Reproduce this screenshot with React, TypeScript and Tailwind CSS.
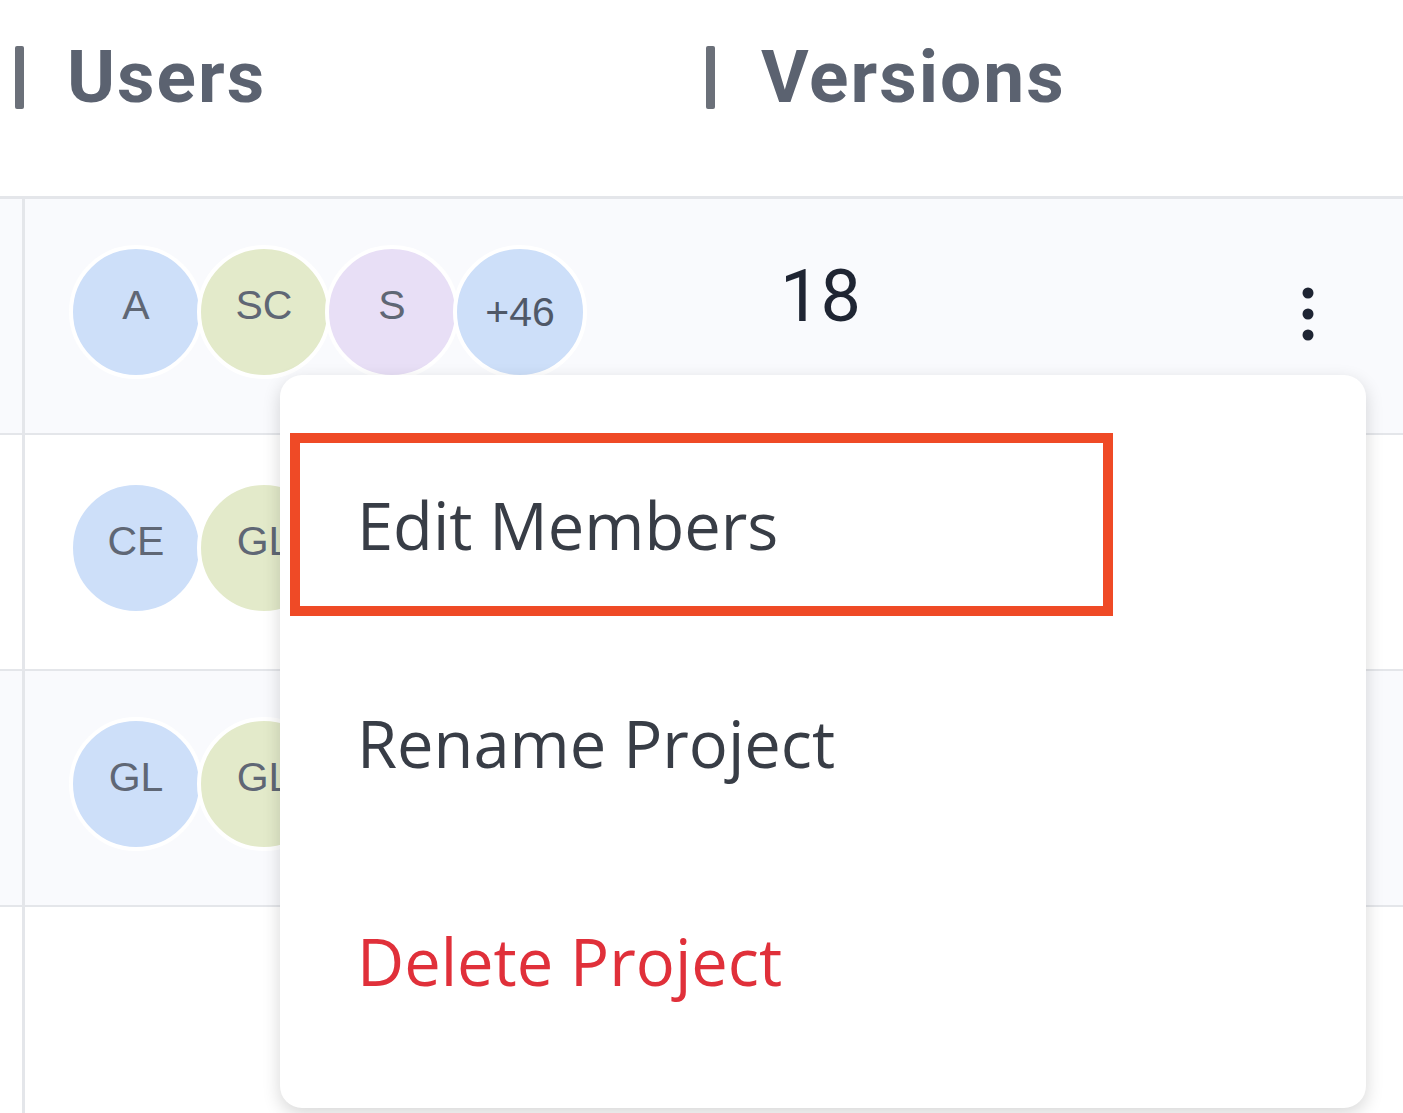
import React from 'react';

type Avatar = { label: string; color: string };

const rows: { avatars: Avatar[]; versions: string; shaded: boolean }[] = [
  {
    avatars: [
      { label: 'A', color: 'bg-[#cddff9]' },
      { label: 'SC', color: 'bg-[#e3eaca]' },
      { label: 'S', color: 'bg-[#e8dff6]' },
      { label: '+46', color: 'bg-[#cddff9]' },
    ],
    versions: '18',
    shaded: true,
  },
  {
    avatars: [
      { label: 'CE', color: 'bg-[#cddff9]' },
      { label: 'GL', color: 'bg-[#e3eaca]' },
    ],
    versions: '',
    shaded: false,
  },
  {
    avatars: [
      { label: 'GL', color: 'bg-[#cddff9]' },
      { label: 'GL', color: 'bg-[#e3eaca]' },
    ],
    versions: '',
    shaded: true,
  },
];

const KebabIcon = () => (
  <svg width="12" height="54" viewBox="0 0 12 54" className="text-[#1e2433]">
    <circle cx="6" cy="6" r="5.5" fill="currentColor" />
    <circle cx="6" cy="27" r="5.5" fill="currentColor" />
    <circle cx="6" cy="48" r="5.5" fill="currentColor" />
  </svg>
);

const App: React.FC = () => {
  return (
    <div className="relative w-full h-[1113px] overflow-hidden bg-white">
      {/* Header */}
      <div className="h-[196px] border-b-[3px] border-[#e4e6ea] box-content">
        <div className="flex items-center h-[72px] pt-[41px] box-content font-['Roboto',sans-serif] font-bold text-[73px] tracking-[2px] leading-none text-[#5b6270]">
          <div className="flex items-center w-[691px] ml-[15px]">
            <span className="w-[9px] h-[63px] bg-[#6b7079] rounded-[2px]" />
            <span className="ml-[43px]">Users</span>
          </div>
          <div className="flex items-center">
            <span className="w-[9px] h-[63px] bg-[#6b7079] rounded-[2px]" />
            <span className="ml-[46px]">Versions</span>
          </div>
        </div>
      </div>

      {/* Rows */}
      {[...rows, null].map((row, i) => (
        <div
          key={i}
          className={`flex ${row ? 'h-[236px] border-b-2 border-[#e4e6ea]' : 'h-[240px]'} ${
            row && row.shaded ? 'bg-[#f9fafd]' : 'bg-white'
          }`}
        >
          <div className="w-[22px]" />
          <div className="w-[3px] bg-[#e4e6ea]" />
          <div className="w-[681px] flex items-start pt-[46px] pl-[44px]">
            {row?.avatars.map((a, j) => (
              <div
                key={j}
                className={`${j > 0 ? '-ml-[6px]' : ''} w-[134px] h-[134px] rounded-full border-4 border-white ${a.color} flex items-center justify-center font-['Liberation_Sans',Arial,sans-serif] text-[41px] text-[#5f6775]`}
              >
                <span className={a.label.startsWith('+') ? 'mt-[2px] text-[#4f5868]' : 'mb-[12px]'}>{a.label}</span>
              </div>
            ))}
          </div>
          {row && row.versions && (
            <div className="flex-1 flex items-start pt-[62px] pl-[74px] pr-[89px]">
              <span className="font-['Roboto',sans-serif] text-[72px] leading-none text-[#1f2533]">
                {row.versions}
              </span>
              <div className="ml-auto mt-[26px]">
                <KebabIcon />
              </div>
            </div>
          )}
        </div>
      ))}

      {/* Dropdown menu */}
      <div className="absolute left-[280px] top-[375px] w-[1086px] h-[733px] bg-white rounded-[22px] shadow-[0_6px_18px_rgba(0,0,0,0.16)] pt-[41px] font-['Open_Sans',sans-serif] text-[65px] leading-none">
        <div className="h-[218px] flex items-center pl-[77px] text-[#383d46]">Edit Members</div>
        <div className="h-[218px] flex items-center pl-[77px] text-[#383d46]">Rename Project</div>
        <div className="h-[218px] flex items-center pl-[77px] text-[#e0303a]">Delete Project</div>
        {/* highlight annotation */}
        <div className="absolute left-[10px] top-[58px] w-[823px] h-[183px] border-[10px] border-[#ef4a26]" />
      </div>
    </div>
  );
};

export default App;
